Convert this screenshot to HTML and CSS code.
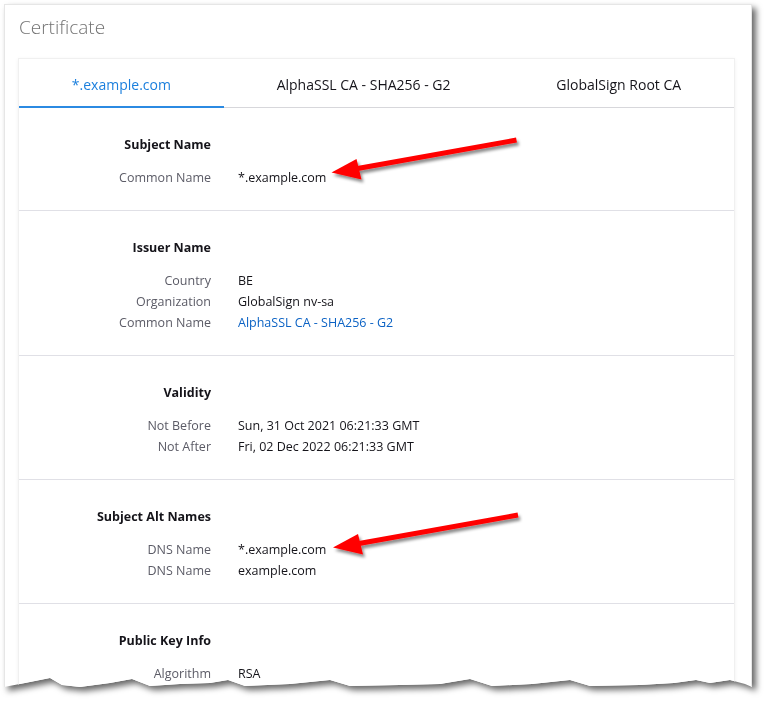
FILE: index.html
```html
<!DOCTYPE html>
<html lang="en">
<head>
  <meta charset="UTF-8">
  <title>Certificate</title>
  <link rel="stylesheet" href="styles.css">
</head>
<body>
  <div class="paper">
    <div class="sheet">
      <h1 class="page-title">Certificate</h1>

      <div class="cert-card">
        <div class="tabs">
          <div class="tab active">*.example.com</div>
          <div class="tab">AlphaSSL CA - SHA256 - G2</div>
          <div class="tab">GlobalSign Root CA</div>
        </div>

        <div class="section">
          <div class="section-title">Subject Name</div>
          <div class="row"><span class="label">Common Name</span><span class="value">*.example.com</span></div>
        </div>

        <div class="section">
          <div class="section-title">Issuer Name</div>
          <div class="row"><span class="label">Country</span><span class="value">BE</span></div>
          <div class="row"><span class="label">Organization</span><span class="value">GlobalSign nv-sa</span></div>
          <div class="row"><span class="label">Common Name</span><a class="value link" href="#">AlphaSSL CA - SHA256 - G2</a></div>
        </div>

        <div class="section">
          <div class="section-title">Validity</div>
          <div class="row"><span class="label">Not Before</span><span class="value">Sun, 31 Oct 2021 06:21:33 GMT</span></div>
          <div class="row"><span class="label">Not After</span><span class="value">Fri, 02 Dec 2022 06:21:33 GMT</span></div>
        </div>

        <div class="section">
          <div class="section-title">Subject Alt Names</div>
          <div class="row"><span class="label">DNS Name</span><span class="value">*.example.com</span></div>
          <div class="row"><span class="label">DNS Name</span><span class="value">example.com</span></div>
        </div>

        <div class="section">
          <div class="section-title">Public Key Info</div>
          <div class="row"><span class="label">Algorithm</span><span class="value">RSA</span></div>
        </div>
      </div>
    </div>
  </div>

  <!-- annotation arrows drawn over the screenshot -->
  <svg class="arrows" width="766" height="702" viewBox="0 0 766 702">
    <defs>
      <filter id="arrow-shadow" x="-10%" y="-30%" width="130%" height="180%">
        <feDropShadow dx="2" dy="3" stdDeviation="1.6" flood-color="#000" flood-opacity="0.45"/>
      </filter>
      <g id="arrow">
        <line x1="516.5" y1="140" x2="352" y2="169.5" stroke="#f00" stroke-width="5"/>
        <polygon points="331.5,172.5 356.5,159 361.5,179.5" fill="#f00"/>
      </g>
    </defs>
    <use href="#arrow" filter="url(#arrow-shadow)"/>
    <use href="#arrow" transform="translate(1.5 375)" filter="url(#arrow-shadow)"/>
  </svg>
</body>
</html>
```

FILE: styles.css
```css
/* page */
body {
  margin: 0;
  background-color: #fff;
  font-family: "Open Sans", "Noto Sans", sans-serif;
  color: #15141a;
  width: 766px;
  height: 702px;
  overflow: hidden;
  position: relative;
}

.paper {
  padding: 4px 0 0 4px;
  filter: drop-shadow(4px 4px 3px rgba(0, 0, 0, 0.6));
}

.sheet {
  width: 746px;
  height: 700px;
  background-color: #fff;
  border: 1px solid #e6e6e6;
  clip-path: polygon(0 0, 100% 0, 100% 683px,
    741px 680px, 726px 676px, 706px 679px, 692px 676px, 670px 679px, 636px 681px,
    586px 682px, 566px 676px, 528px 680px, 488px 682px, 466px 675px, 436px 680px,
    396px 681px, 346px 682px, 326px 676px, 286px 680px, 241px 682px, 224px 676px,
    206px 679px, 176px 680px, 146px 682px, 128px 675px, 106px 679px, 76px 683px,
    58px 681px, 46px 674px, 21px 679px, 0 683px);
}

.page-title {
  margin: 0;
  padding: 8px 0 0 14px;
  height: 41px;
  box-sizing: border-box;
  font-size: 19px;
  font-weight: 300;
  line-height: 28px;
  color: #737373;
}

.cert-card {
  margin: 12px 16px 0 13px;
  border: 1px solid #f0f0f0;
  box-shadow: 0 1px 4px rgba(0, 0, 0, 0.06);
  background-color: #fff;
}

/* tabs */
.tabs {
  display: flex;
  border-bottom: 1px solid #d7d7db;
}

.tab {
  flex: 1 1 auto;
  text-align: center;
  font-size: 14px;
  line-height: 20px;
  padding: 16px 0 11px;
  margin-bottom: -1px;
  border-bottom: 2px solid transparent;
  color: #15141a;
}

.tab.active {
  color: #1b7fdd;
  border-bottom-color: #2b8ae2;
}

/* sections */
.section {
  padding: 26px 0 22px;
  border-bottom: 1px solid #e0e0e6;
  font-size: 12.5px;
}

.section-title {
  width: 192px;
  text-align: right;
  font-weight: bold;
  line-height: 21px;
  margin-bottom: 12px;
}

.row {
  display: grid;
  grid-template-columns: 192px 1fr;
  column-gap: 27px;
  line-height: 21px;
}

.label {
  text-align: right;
  color: #5b5b66;
}

.value {
  color: #15141a;
}

.link {
  color: #0b62c4;
  text-decoration: none;
}

.arrows {
  position: absolute;
  top: 0;
  left: 0;
  pointer-events: none;
}
```
